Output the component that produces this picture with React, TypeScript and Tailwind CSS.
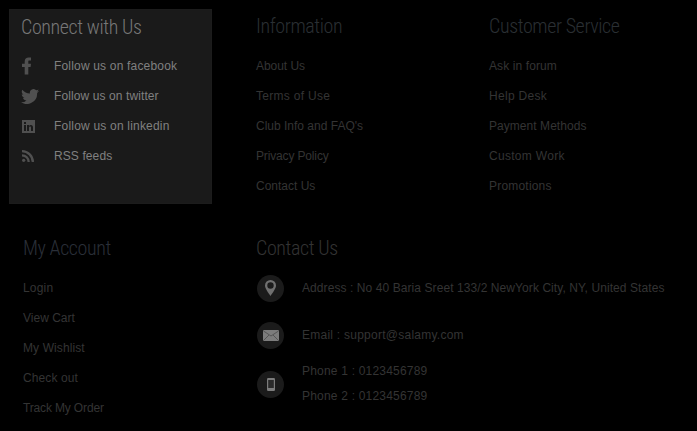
import React from "react";

type Row = [string, string];

const Heading = ({ children, color }: { children: React.ReactNode; color: string }) => (
  <h3 className="h-[34px] font-['Roboto',sans-serif] text-[20px] leading-[34px] font-light font-stretch-[75%] tracking-[-0.4px] whitespace-nowrap" style={{ color }}>
    {children}
  </h3>
);

const LinkList = ({ items }: { items: Row[] }) => (
  <ul className="mt-[8px] flex flex-col">
    {items.map(([t, track]) => (
      <li key={t} className={`h-[30px] text-[12px] leading-[30px] text-[#343434] ${track}`}>{t}</li>
    ))}
  </ul>
);

const Fb = () => (
  <svg width="9" height="18" viewBox="0 0 10 19" fill="#505050" className="ml-[1px]"><path d="M3 19V10.5H0V7h3V4.6C3 1.6 4.7 0 7.4 0H10v3.4H8.3C7.2 3.4 7 4 7 4.9V7h3l-.5 3.5H7V19z" /></svg>
);
const Tw = () => (
  <svg width="18" height="15" viewBox="0 0 24 20" fill="#505050"><path d="M24 2.4c-.9.4-1.8.7-2.8.8 1-.6 1.8-1.6 2.200-2.700-.9.600-2 1-3.100 1.200A4.900 4.900 0 0 0 11.900 6.100C7.800 5.900 4.200 3.900 1.700.9.400 3.100 1 6 3.200 7.500c-.8 0-1.600-.2-2.200-.6 0 2.400 1.700 4.400 3.900 4.900-.7.200-1.500.2-2.200.1.600 2 2.400 3.400 4.600 3.400A9.900 9.900 0 0 1 0 17.800 14 14 0 0 0 21.500 5.400c1-.7 1.800-1.600 2.500-3z" /></svg>
);
const In = () => (
  <svg width="13" height="13" viewBox="0 0 13 13" className="ml-[1px]"><rect width="13" height="13" fill="#505050" /><g fill="#1a1a1a"><rect x="2" y="5" width="2" height="6" /><rect x="2" y="2" width="2" height="2" /><path d="M5 5h2v1c.4-.7 1-1.100 1.900-1.100C10.400 4.900 11 5.900 11 7.500V11H9V7.900C9 7 8.700 6.600 8.100 6.600S7 7.100 7 7.900V11H5z" /></g></svg>
);
const Rss = () => (
  <svg width="12" height="12" viewBox="0 0 13 13" fill="#505050" className="ml-[1px]"><circle cx="1.800" cy="11.200" r="1.800" /><path d="M0 4.500v2.500A6 6 0 0 1 6 13h2.500A8.500 8.500 0 0 0 0 4.500z" /><path d="M0 0v2.500A10.500 10.500 0 0 1 10.500 13H13A13 13 0 0 0 0 0z" /></svg>
);

const Pin = () => (
  <svg width="11" height="16" viewBox="0 0 11 16" fill="#707070" fillRule="evenodd"><path d="M5.500 0A5.500 5.500 0 0 0 0 5.500C0 8.500 3.500 13 5.500 16 7.500 13 11 8.500 11 5.500A5.500 5.500 0 0 0 5.500 0zm0 2.300a3.200 3.200 0 1 1 0 6.400 3.200 3.200 0 0 1 0-6.400z" /></svg>
);
const Mail = () => (
  <svg width="16" height="11" viewBox="0 0 16 11"><rect width="16" height="11" rx="1" fill="#7c7c7c" /><path d="M0.500 1l7.500 5 7.500-5M0.500 10.500l5.500-5.500M15.500 10.500l-5.500-5.500" fill="none" stroke="#3a3a3a" strokeWidth="0.600" /></svg>
);
const Phone = () => (
  <svg width="8" height="13" viewBox="0 0 8 13"><rect width="8" height="13" rx="1.200" fill="#7c7c7c" /><rect x="1.200" y="2" width="5.600" height="8" fill="#2a2a2a" /></svg>
);

const Circle = ({ children }: { children: React.ReactNode }) => (
  <div className="ml-[1px] flex h-[27px] w-[27px] shrink-0 items-center justify-center rounded-full bg-[#1b1b1b]">{children}</div>
);

const social = [
  { icon: <Fb />, text: "Follow us on facebook", track: "tracking-[0.18px]" },
  { icon: <Tw />, text: "Follow us on twitter", track: "tracking-[0.1px]" },
  { icon: <In />, text: "Follow us on linkedin", track: "tracking-[0.2px]" },
  { icon: <Rss />, text: "RSS feeds", track: "tracking-[0.1px]" },
];

const info: Row[] = [
  ["About Us", "tracking-[-0.05px]"],
  ["Terms of Use", "tracking-[0.3px]"],
  ["Club Info and FAQ's", "tracking-[0px]"],
  ["Privacy Policy", "tracking-[-0.15px]"],
  ["Contact Us", "tracking-[0px]"],
];
const service: Row[] = [
  ["Ask in forum", "tracking-[0.1px]"],
  ["Help Desk", "tracking-[0.3px]"],
  ["Payment Methods", "tracking-[0.05px]"],
  ["Custom Work", "tracking-[0.3px]"],
  ["Promotions", "tracking-[0.2px]"],
];
const account: Row[] = [
  ["Login", "tracking-[0.2px]"],
  ["View Cart", "tracking-[0px]"],
  ["My Wishlist", "tracking-[0.1px]"],
  ["Check out", "tracking-[0.1px]"],
  ["Track My Order", "tracking-[-0.15px]"],
];

export default function App() {
  return (
    <div className="h-[431px] w-[697px] overflow-hidden bg-black font-['Liberation_Sans',Arial,sans-serif]">
      <div className="grid grid-cols-[247px_233px_1fr] pt-[9px] pl-[9px]">
        <div className="h-[195px] w-[203px] border border-[#1c1c1c] bg-[#1a1a1a] pl-[11px]">
          <Heading color="#777777">Connect with Us</Heading>
          <ul className="mt-[7px] flex flex-col">
            {social.map((s) => (
              <li key={s.text} className="flex h-[30px] items-center">
                <span className="flex w-[33px] items-center">{s.icon}</span>
                <span className={`text-[12px] text-[#808080] ${s.track}`}>{s.text}</span>
              </li>
            ))}
          </ul>
        </div>
        <div>
          <Heading color="#2a2f33">Information</Heading>
          <LinkList items={info} />
        </div>
        <div>
          <Heading color="#2a2f33">Customer Service</Heading>
          <LinkList items={service} />
        </div>
      </div>
      <div className="mt-[27px] grid grid-cols-[247px_1fr] pl-[9px]">
        <div className="pl-[14px]">
          <Heading color="#2a2f38">My Account</Heading>
          <LinkList items={account} />
        </div>
        <div>
          <Heading color="#333333">Contact Us</Heading>
          <div className="mt-[9px] flex flex-col text-[12px] text-[#343434]">
            <div className="flex h-[28px] items-center gap-[18px]">
              <Circle><Pin /></Circle>
              <span className="whitespace-nowrap tracking-[0.08px]">Address : No 40 Baria Sreet 133/2 NewYork City, NY, United States</span>
            </div>
            <div className="mt-[19px] flex h-[28px] items-center gap-[18px]">
              <Circle><Mail /></Circle>
              <span className="tracking-[0.25px]">Email : support@salamy.com</span>
            </div>
            <div className="mt-[10px] flex items-center gap-[18px]">
              <Circle><Phone /></Circle>
              <div className="flex flex-col leading-[25px] tracking-[0.2px]">
                <span>Phone 1 : 0123456789</span>
                <span>Phone 2 : 0123456789</span>
              </div>
            </div>
          </div>
        </div>
      </div>
    </div>
  );
}
